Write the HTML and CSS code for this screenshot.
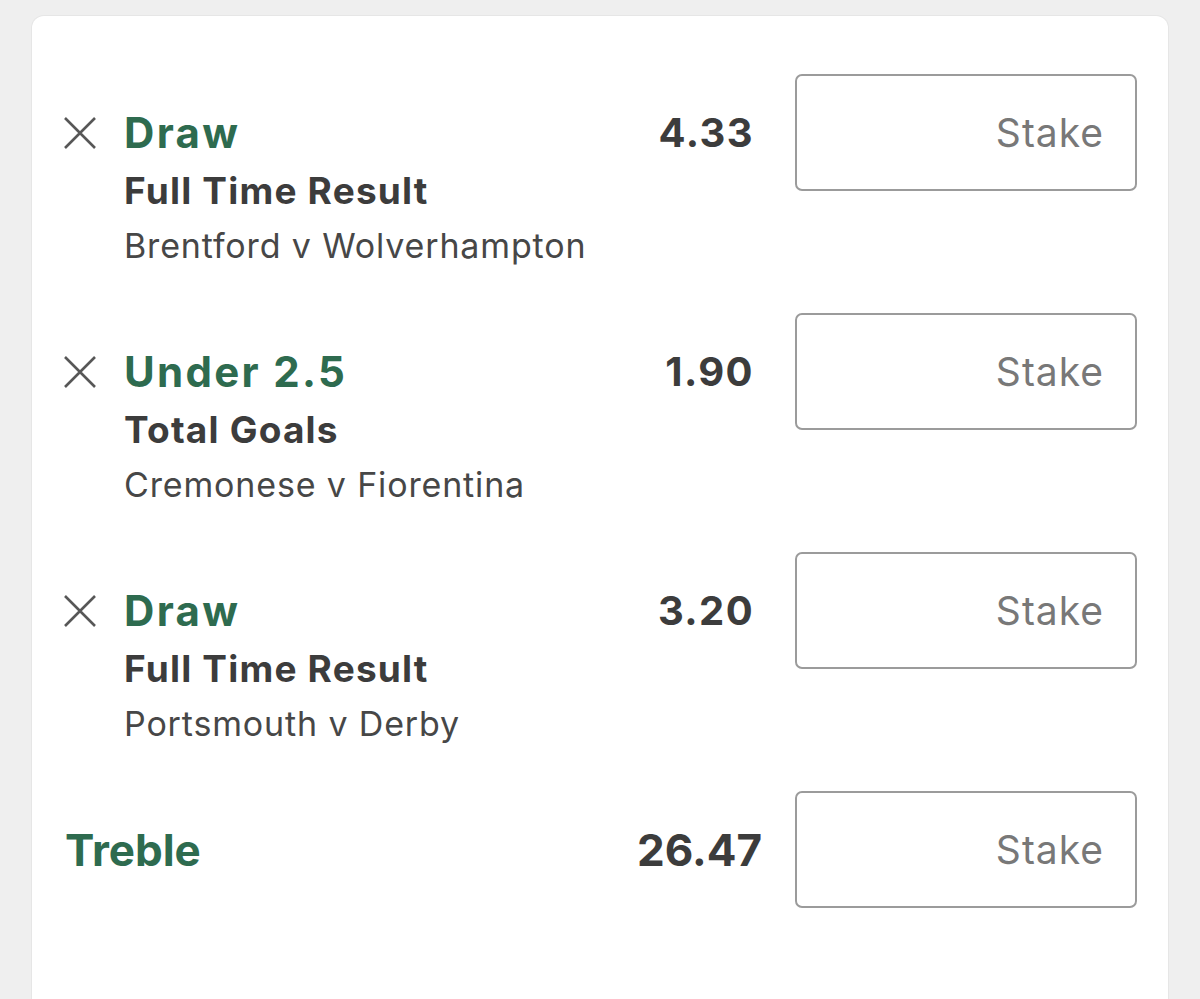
FILE: index.html
```html
<!DOCTYPE html>
<html lang="en">
<head>
<meta charset="utf-8">
<title>Bet Slip</title>
<link rel="stylesheet" href="styles.css">
</head>
<body>
<div class="card">
  <div class="sel">
    <span class="remove"><svg viewBox="0 0 34 34" width="34" height="34"><path d="M2 2 L32 32 M32 2 L2 32" stroke="#575757" stroke-width="2.6" fill="none"/></svg></span>
    <div class="info">
      <div class="title">Draw</div>
      <div class="market">Full Time Result</div>
      <div class="match">Brentford v Wolverhampton</div>
    </div>
    <div class="odds">4.33</div>
    <input class="stake" type="text" placeholder="Stake">
  </div>
  <div class="sel">
    <span class="remove"><svg viewBox="0 0 34 34" width="34" height="34"><path d="M2 2 L32 32 M32 2 L2 32" stroke="#575757" stroke-width="2.6" fill="none"/></svg></span>
    <div class="info">
      <div class="title">Under 2.5</div>
      <div class="market">Total Goals</div>
      <div class="match">Cremonese v Fiorentina</div>
    </div>
    <div class="odds">1.90</div>
    <input class="stake" type="text" placeholder="Stake">
  </div>
  <div class="sel">
    <span class="remove"><svg viewBox="0 0 34 34" width="34" height="34"><path d="M2 2 L32 32 M32 2 L2 32" stroke="#575757" stroke-width="2.6" fill="none"/></svg></span>
    <div class="info">
      <div class="title">Draw</div>
      <div class="market">Full Time Result</div>
      <div class="match">Portsmouth v Derby</div>
    </div>
    <div class="odds">3.20</div>
    <input class="stake" type="text" placeholder="Stake">
  </div>
  <div class="multi">
    <div class="multi-title">Treble</div>
    <div class="multi-odds">26.47</div>
    <input class="stake" type="text" placeholder="Stake">
  </div>
</div>
</body>
</html>
```

FILE: styles.css
```css
html, body {
  margin: 0;
  padding: 0;
  background: #efefef;
  font-family: Inter, "Liberation Sans", Arial, sans-serif;
}

.card {
  margin: 16px 32px 0 32px;
  min-height: 1100px;
  background: #ffffff;
  border-radius: 12px;
  box-shadow: 0 0 0 1px #e6e6e6;
  padding: 58px 31px 0 31px;
  box-sizing: border-box;
  display: flex;
  flex-direction: column;
  gap: 42px;
}

.sel {
  display: flex;
  align-items: flex-start;
}

.remove {
  width: 34px;
  height: 34px;
  margin-top: 42px;
  margin-right: 27px;
  flex: none;
  display: block;
}

.remove svg {
  display: block;
}

.info {
  flex: 1;
  padding-top: 30px;
}

.title {
  font-size: 42px;
  line-height: 58px;
  font-weight: 700;
  letter-spacing: 2.3px;
  color: #2e6b4f;
}

.market {
  font-size: 37px;
  line-height: 58px;
  font-weight: 700;
  letter-spacing: 1.2px;
  color: #3c3c3c;
}

.match {
  font-size: 34px;
  line-height: 51px;
  font-weight: 400;
  letter-spacing: 0.85px;
  color: #474747;
}

.odds {
  margin-top: 30px;
  font-size: 40px;
  line-height: 58px;
  font-weight: 700;
  letter-spacing: 1.4px;
  color: #3c3c3c;
  margin-right: 41px;
}

.stake {
  flex: none;
  width: 342px;
  height: 117px;
  box-sizing: border-box;
  border: 2px solid #9b9b9b;
  border-radius: 7px;
  background: #ffffff;
  padding: 0 31px 0 10px;
  text-align: right;
  font-family: inherit;
  font-size: 39px;
  letter-spacing: 1px;
  color: #3c3c3c;
  outline: none;
}

.stake::placeholder {
  color: #787878;
  opacity: 1;
}

.multi {
  display: flex;
  align-items: center;
}

.multi-title {
  flex: 1;
  padding-left: 2px;
  font-size: 44px;
  line-height: 58px;
  font-weight: 700;
  color: #2e6b4f;
}

.multi-odds {
  font-size: 44px;
  line-height: 58px;
  font-weight: 700;
  color: #3c3c3c;
  margin-right: 33px;
}
```
